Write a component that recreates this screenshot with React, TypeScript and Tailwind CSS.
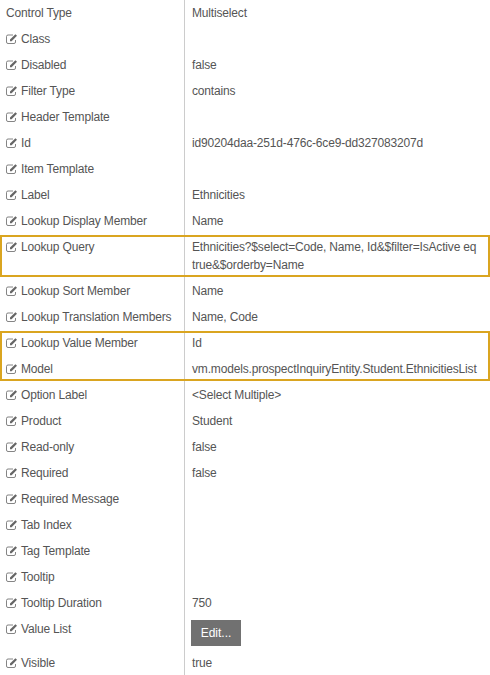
type Prop = { label: string; value?: string; noIcon?: boolean; button?: boolean };

const EditIcon = () => (
  <svg viewBox="0 0 12 11" className="w-[12px] h-[11px] mt-[3px] mr-[3px] shrink-0 text-[#666666]">
    <path
      d="M9.5 7V9A1.5 1.5 0 0 1 8 10.5H2A1.5 1.5 0 0 1 .5 9V3.5A1.5 1.5 0 0 1 2 2h5"
      fill="none"
      stroke="currentColor"
      strokeOpacity="0.8"
    />
    <path d="M4 8.3V6.6L9.4 1.2l1.6 1.6L5.6 8.3z" fill="currentColor" />
  </svg>
);

const PropRow = ({ label, value, noIcon, button }: Prop) => (
  <div className="flex">
    <div className="w-[185px] shrink-0 border-r border-[#cccccc] pl-[6px] py-[4px] flex items-start">
      {!noIcon && <EditIcon />}
      <span>{label}</span>
    </div>
    <div className="flex-1 pl-[7px] pr-[6px] py-[4px] min-h-[26px]">
      {button ? (
        <button className="block -ml-px w-[50px] h-[26px] bg-[#717171] text-white text-[12px] tracking-normal">Edit...</button>
      ) : (
        value
      )}
    </div>
  </div>
);

const Highlight = ({ rows }: { rows: Prop[] }) => (
  <div className="relative">
    {rows.map((r) => (
      <PropRow key={r.label} {...r} />
    ))}
    {/* gold marker drawn over the rows */}
    <div className="absolute inset-x-0 inset-y-[1px] border-2 border-[#daa520] pointer-events-none"></div>
  </div>
);

const App = () => {
  const top: Prop[] = [
    { label: 'Control Type', value: 'Multiselect', noIcon: true },
    { label: 'Class' },
    { label: 'Disabled', value: 'false' },
    { label: 'Filter Type', value: 'contains' },
    { label: 'Header Template' },
    { label: 'Id', value: 'id90204daa-251d-476c-6ce9-dd327083207d' },
    { label: 'Item Template' },
    { label: 'Label', value: 'Ethnicities' },
    { label: 'Lookup Display Member', value: 'Name' },
  ];
  const middle: Prop[] = [
    { label: 'Lookup Sort Member', value: 'Name' },
    { label: 'Lookup Translation Members', value: 'Name, Code' },
  ];
  const bottom: Prop[] = [
    { label: 'Option Label', value: '<Select Multiple>' },
    { label: 'Product', value: 'Student' },
    { label: 'Read-only', value: 'false' },
    { label: 'Required', value: 'false' },
    { label: 'Required Message' },
    { label: 'Tab Index' },
    { label: 'Tag Template' },
    { label: 'Tooltip' },
    { label: 'Tooltip Duration', value: '750' },
    { label: 'Value List', button: true },
    { label: 'Visible', value: 'true' },
  ];

  return (
    <div className="w-[490px] h-[675px] overflow-hidden bg-white text-[#555555] text-[12px] leading-[18px] tracking-[-0.17px] font-['Liberation_Sans',Arial,sans-serif]">
      {top.map((r) => (
        <PropRow key={r.label} {...r} />
      ))}
      <Highlight rows={[{ label: 'Lookup Query', value: 'Ethnicities?$select=Code, Name, Id&$filter=IsActive eq true&$orderby=Name' }]} />
      {middle.map((r) => (
        <PropRow key={r.label} {...r} />
      ))}
      <Highlight
        rows={[
          { label: 'Lookup Value Member', value: 'Id' },
          { label: 'Model', value: 'vm.models.prospectInquiryEntity.Student.EthnicitiesList' },
        ]}
      />
      {bottom.map((r) => (
        <PropRow key={r.label} {...r} />
      ))}
    </div>
  );
};

export default App;
